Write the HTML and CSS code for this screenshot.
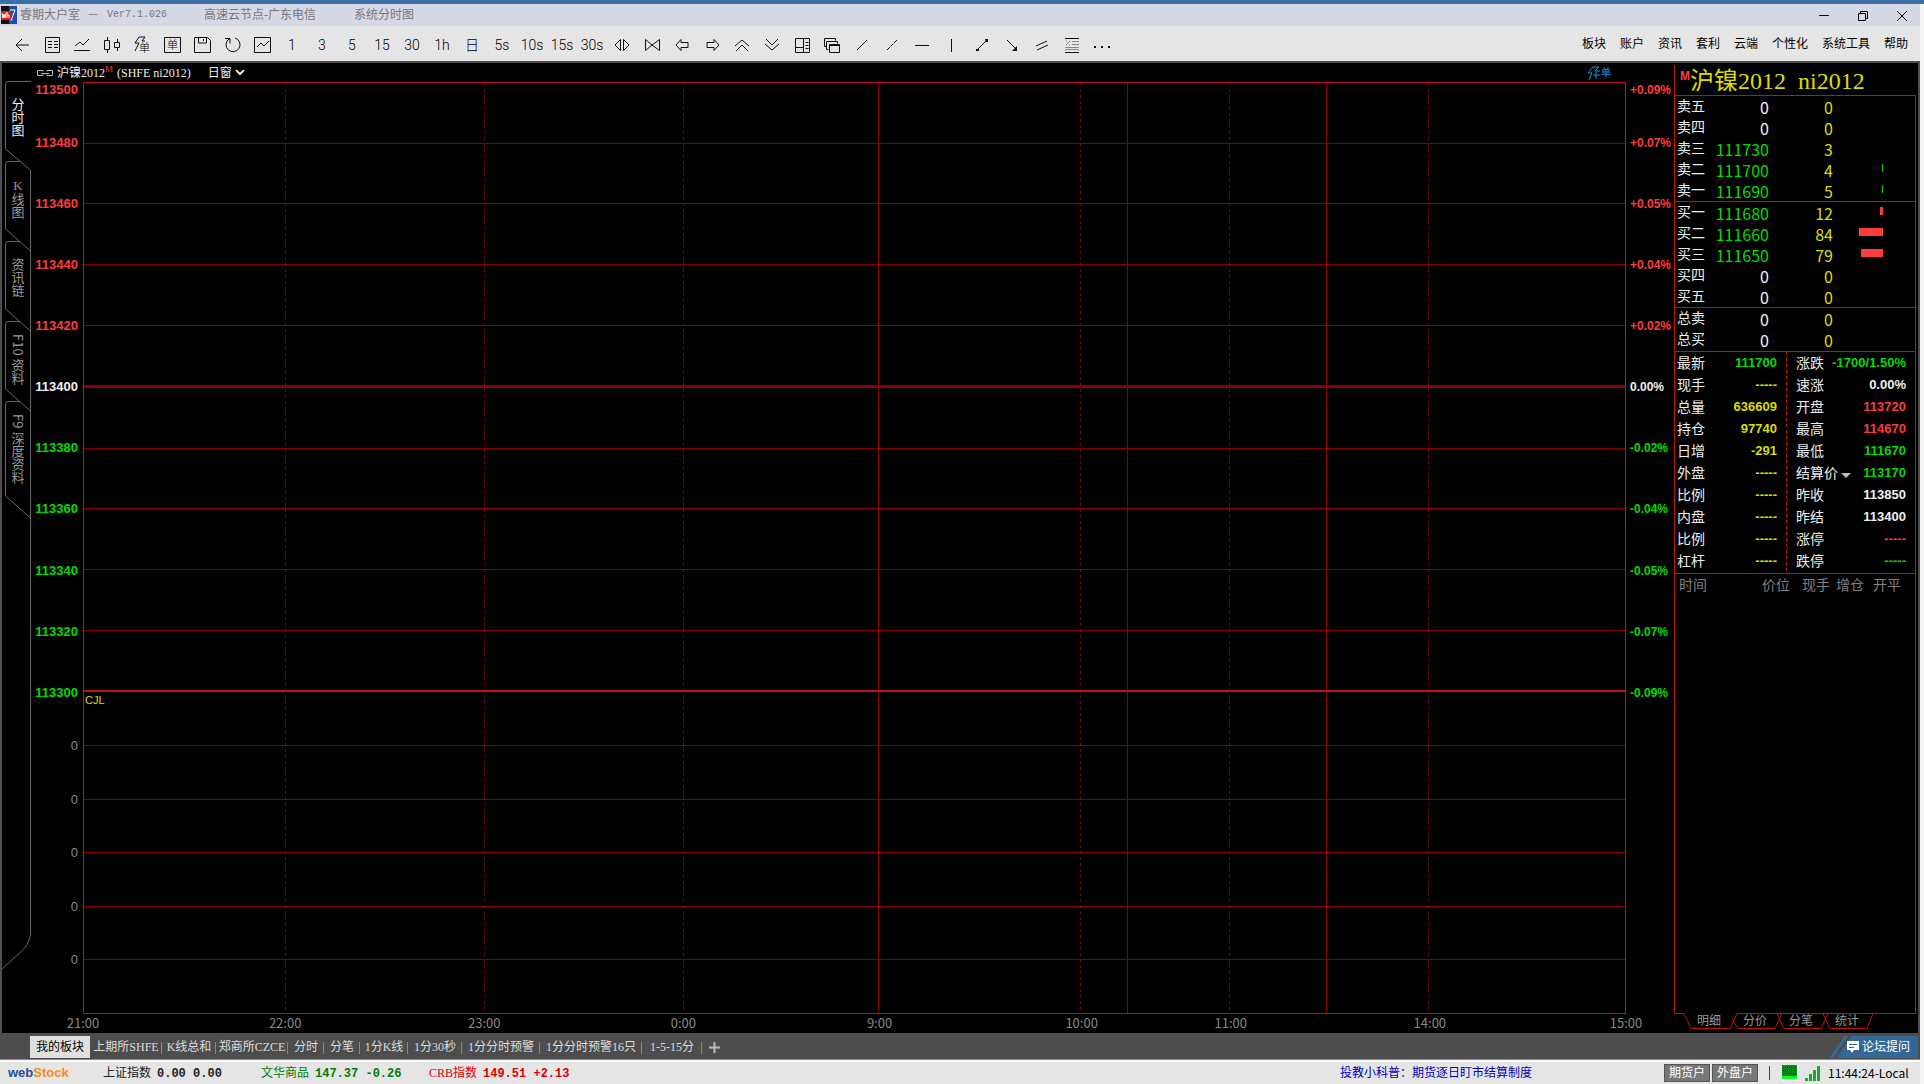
FILE: index.html
```html
<!DOCTYPE html>
<html lang="zh-CN">
<head>
    <meta charset="UTF-8">
    <meta name="viewport" content="width=device-width, initial-scale=1.0">
    <title>睿期大户室</title>
    <link rel="stylesheet" href="styles.css">
</head>
<body>
    <div class="window">
        <header class="titlebar">
            <svg class="app-icon" width="16" height="18" viewBox="0 0 16 18">
                <rect width="16" height="18" fill="#111"/>
                <rect x="8" width="8" height="18" fill="#1b4fa8"/>
                <rect y="5" width="10" height="9" fill="#d81e1e"/>
                <path d="M1 7l1 5 1-4 1 4 1-5M6 6v6M6 9h2v3M9 4h5l-4 11" stroke="#fff" fill="none"/>
            </svg>
            <span class="app-name">睿期大户室</span>
            <span class="dash">－</span>
            <span class="version">Ver7.1.026</span>
            <span class="node">高速云节点-广东电信</span>
            <span>系统分时图</span>
            <div class="win-buttons">
                <button aria-label="最小化"><svg width="12" height="12"><path d="M1 5.500h10"/></svg></button>
                <button aria-label="还原"><svg width="12" height="12"><path d="M1.500 3.500h7v7h-7zM3.500 3v-1.500h7v7h-2"/></svg></button>
                <button aria-label="关闭"><svg width="12" height="12"><path d="M1 1l10 10M11 1L1 11"/></svg></button>
            </div>
        </header>

        <nav class="toolbar">
            <div class="tools">
                <button aria-label="返回"><svg viewBox="0 0 18 18"><path d="M3 9h13M9 3L3 9l6 6"/></svg></button>
                <button aria-label="报价"><svg viewBox="0 0 18 18"><path d="M2.500 1.500h14v15h-14zM5 5.500h4M11 5.500h4M5 8.500h4M11 8.500h4M5 11.500h4M11 11.500h4"/></svg></button>
                <button aria-label="分时"><svg viewBox="0 0 18 18"><path d="M1 14.500h16M2 10l5-4 3 3 6-6"/></svg></button>
                <button aria-label="K线"><svg viewBox="0 0 18 18"><path d="M1.500 4.500h5v9h-5zM4.500 1v3M4.500 14v3M11.500 6.500h5v5h-5zM14.500 3v3M14.500 12v3"/></svg></button>
                <button aria-label="闪电下单"><svg viewBox="0 0 18 18"><path d="M6 1h6l-3 4h3M6 1L2 7h4l-4 8"/><text x="6" y="16">单</text></svg></button>
                <button aria-label="下单"><svg viewBox="0 0 18 18"><path d="M1.500 1.500h16v15h-16z"/><text x="4" y="13">单</text></svg></button>
                <button aria-label="保存"><svg viewBox="0 0 18 18"><path d="M1.500 1.500h13l3 3v12h-16zM5.500 2v5h8v-5M10.500 3v2"/></svg></button>
                <button aria-label="刷新"><svg viewBox="0 0 18 18"><path d="M12 2a7 7 0 1 1-6 1M2 2.500h5v5"/></svg></button>
                <button aria-label="指标"><svg viewBox="0 0 18 18"><path d="M1.500 1.500h16v15h-16zM4 11l4-4 3 3 5-5"/></svg></button>
                <button>1</button>
                <button>3</button>
                <button>5</button>
                <button>15</button>
                <button>30</button>
                <button>1h</button>
                <button>日</button>
                <button>5s</button>
                <button>10s</button>
                <button>15s</button>
                <button>30s</button>
                <button aria-label="放大"><svg viewBox="0 0 18 18"><path d="M7.500 3.500v11L2 9zM10.500 3.500v11L16 9z"/></svg></button>
                <button aria-label="缩小"><svg viewBox="0 0 18 18"><path d="M2.500 3.500v11L9 9zM16.500 3.500v11L9 9z"/></svg></button>
                <button aria-label="左移"><svg viewBox="0 0 18 18"><path d="M3 9l5-5.500v3h7v5h-7v3z"/></svg></button>
                <button aria-label="右移"><svg viewBox="0 0 18 18"><path d="M16 9l-5-5.500v3h-7v5h7v3z"/></svg></button>
                <button aria-label="上移"><svg viewBox="0 0 18 18"><path d="M2 10l7-6 7 6M3 15l6-6 6 6"/></svg></button>
                <button aria-label="下移"><svg viewBox="0 0 18 18"><path d="M2 8l7 6 7-6M3 3l6 6 6-6"/></svg></button>
                <button aria-label="布局"><svg viewBox="0 0 18 18"><path d="M2.500 2.500h14v14h-14zM10.500 2v15M3 11.500h7M12.500 6.500h3M12.500 9.500h3M12.500 12.500h3"/></svg></button>
                <button aria-label="窗口"><svg viewBox="0 0 18 18"><path d="M3.500 10.500h-2v-8h11v2M5.500 13.500h-2v-8h11v2M6.500 8.500h10v8h-10zM6 9.500h11"/></svg></button>
                <button aria-label="线段"><svg viewBox="0 0 18 18"><path d="M4 14L14 4"/></svg></button>
                <button aria-label="虚线"><svg viewBox="0 0 18 18"><path d="M4 14L14 4" stroke-dasharray="4 1"/></svg></button>
                <button aria-label="水平线"><svg viewBox="0 0 18 18"><path d="M2 9.500h14"/></svg></button>
                <button aria-label="垂直线"><svg viewBox="0 0 18 18"><path d="M8.500 3v13"/></svg></button>
                <button aria-label="双端线"><svg viewBox="0 0 18 18"><path d="M4 14L14 4"/><path class="solid" d="M3 13h3v2h-3zM12 3h3v3h-2z"/></svg></button>
                <button aria-label="箭头"><svg viewBox="0 0 18 18"><path d="M4 4l9 9"/><path class="solid" d="M14 10v5h-5z"/></svg></button>
                <button aria-label="平行线"><svg viewBox="0 0 18 18"><path d="M3 10l11-5M4 14l11-5"/></svg></button>
                <button aria-label="黄金分割"><svg viewBox="0 0 18 18"><path d="M2 2.500h14M2 16.500h14"/><path class="dim" d="M9 5.500h7M9 8.500h7M2 11.500h14M2 13.500h14M3 9l4-4M3 5h1M6 9h1"/></svg></button>
                <button aria-label="更多"><svg viewBox="0 0 18 18"><path class="solid" d="M1 10h2v2h-2zM8 10h2v2h-2zM15 10h2v2h-2z"/></svg></button>
            </div>
            <div class="menu">
                <a href="#">板块</a>
                <a href="#">账户</a>
                <a href="#">资讯</a>
                <a href="#">套利</a>
                <a href="#">云端</a>
                <a href="#">个性化</a>
                <a href="#">系统工具</a>
                <a href="#">帮助</a>
            </div>
        </nav>

        <main class="workspace">
            <aside class="side">
                <div class="side-tabs">
                    <svg class="side-lines" width="29" height="440" viewBox="0 0 29 440">
                        <path d="M29 .5H6Q3.500 .5 3.500 3V68L28.500 89V437M18 80.500H6Q3.500 80.500 3.500 83V148L28.500 170M18 160.500H6Q3.500 160.500 3.500 163V228L28.500 250M18 240.500H6Q3.500 240.500 3.500 243V308L28.500 330M18 320.500H6Q3.500 320.500 3.500 323V415L28.500 437V440"/>
                    </svg>
                    <div class="side-buttons">
                        <button class="active">分时图</button>
                        <button><span class="upright">K</span>线图</button>
                        <button>资讯链</button>
                        <button>F10 资料</button>
                        <button>F9 深度资料</button>
                    </div>
                </div>
                <div class="side-rule"></div>
                <svg class="side-curve" width="29" height="36" viewBox="0 0 29 36"><path d="M28.500 0C27 12 20 17 12 24L0 35"/></svg>
            </aside>

            <section class="chart">
                <div class="chart-head">
                    <svg width="16" height="8" viewBox="0 0 16 8"><path d="M6 2.500V1.500H.5v5H6V5.500M10 2.500V1.500h5.500v5H10V5.500M4 4.500h8" fill="none" stroke="#bbb"/></svg>
                    <span class="contract">沪镍2012<sup>M</sup></span>
                    <span class="code">(SHFE ni2012)</span>
                    <button class="day">日窗<svg width="10" height="6" viewBox="0 0 10 6"><path d="M1 0l4 4 4-4" fill="none" stroke="#eee" stroke-width="2"/></svg></button>
                    <button class="flash"><svg width="14" height="15" viewBox="0 0 14 15"><path d="M6 1h6L8 5h5M6 1L1 7h4l-3 7M6 9h7M9 6v7" fill="none" stroke="#0a9be8"/></svg>单</button>
                </div>
                <div class="chart-body">
                    <div class="axis price-axis">
                        <div class="prices">
                            <div class="first up"><span>113500</span></div>
                            <div class="up"><span>113480</span></div>
                            <div class="up"><span>113460</span></div>
                            <div class="up"><span>113440</span></div>
                            <div class="up"><span>113420</span></div>
                            <div class="flat"><span>113400</span></div>
                            <div class="down"><span>113380</span></div>
                            <div class="down"><span>113360</span></div>
                            <div class="down"><span>113340</span></div>
                            <div class="down"><span>113320</span></div>
                            <div class="down"><span>113300</span></div>
                        </div>
                        <div class="volumes">
                            <div><span>0</span></div>
                            <div><span>0</span></div>
                            <div><span>0</span></div>
                            <div><span>0</span></div>
                            <div><span>0</span></div>
                            <div></div>
                        </div>
                    </div>
                    <div class="plot">
                        <div class="v-lines">
                            <i class="dash-line"></i><i class="dash-line"></i><i class="dash-line"></i><i class="full-line"></i><i class="dash-line"></i><i class="full-line"></i><i class="dash-line"></i><i class="full-line"></i><i class="dash-line"></i><i></i>
                        </div>
                        <div class="h-lines">
                            <div class="prices">
                                <div></div><div></div><div></div><div></div><div class="mid"></div>
                                <div></div><div></div><div></div><div></div><div class="base"></div>
                            </div>
                            <div class="volumes">
                                <div class="cjl">CJL</div><div></div><div></div><div></div><div></div><div class="last"></div>
                            </div>
                        </div>
                    </div>
                    <div class="axis percent-axis">
                        <div class="prices">
                            <div class="first up"><span>+0.09%</span></div>
                            <div class="up"><span>+0.07%</span></div>
                            <div class="up"><span>+0.05%</span></div>
                            <div class="up"><span>+0.04%</span></div>
                            <div class="up"><span>+0.02%</span></div>
                            <div class="flat"><span>0.00%</span></div>
                            <div class="down"><span>-0.02%</span></div>
                            <div class="down"><span>-0.04%</span></div>
                            <div class="down"><span>-0.05%</span></div>
                            <div class="down"><span>-0.07%</span></div>
                            <div class="down"><span>-0.09%</span></div>
                        </div>
                        <div class="volumes"></div>
                    </div>
                </div>
                <div class="times">
                    <span>21:00</span><span>22:00</span><span>23:00</span><span>0:00</span><span>9:00</span><span>10:00</span><span>11:00</span><span>14:00</span><span>15:00</span>
                </div>
            </section>

            <aside class="quote">
                <div class="quote-box">
                    <h1><sup>M</sup>沪镍2012&nbsp; ni2012</h1>
                    <table class="depth">
                        <tr><th>卖五</th><td>0</td><td>0</td><td></td></tr>
                        <tr><th>卖四</th><td>0</td><td>0</td><td></td></tr>
                        <tr><th>卖三</th><td class="down">111730</td><td>3</td><td></td></tr>
                        <tr><th>卖二</th><td class="down">111700</td><td>4</td><td><i class="bar ask" style="width:1px"></i></td></tr>
                        <tr><th>卖一</th><td class="down">111690</td><td>5</td><td><i class="bar ask" style="width:1px"></i></td></tr>
                    </table>
                    <table class="depth">
                        <tr><th>买一</th><td class="down">111680</td><td>12</td><td><i class="bar" style="width:3px"></i></td></tr>
                        <tr><th>买二</th><td class="down">111660</td><td>84</td><td><i class="bar" style="width:24px"></i></td></tr>
                        <tr><th>买三</th><td class="down">111650</td><td>79</td><td><i class="bar" style="width:22px"></i></td></tr>
                        <tr><th>买四</th><td>0</td><td>0</td><td></td></tr>
                        <tr><th>买五</th><td>0</td><td>0</td><td></td></tr>
                    </table>
                    <table class="depth total">
                        <tr><th>总卖</th><td>0</td><td>0</td><td></td></tr>
                        <tr><th>总买</th><td>0</td><td>0</td><td></td></tr>
                    </table>
                    <div class="stats">
                        <table>
                            <tr><th>最新</th><td class="down">111700</td></tr>
                            <tr><th>现手</th><td>-----</td></tr>
                            <tr><th>总量</th><td>636609</td></tr>
                            <tr><th>持仓</th><td>97740</td></tr>
                            <tr><th>日增</th><td>-291</td></tr>
                            <tr><th>外盘</th><td>-----</td></tr>
                            <tr><th>比例</th><td>-----</td></tr>
                            <tr><th>内盘</th><td>-----</td></tr>
                            <tr><th>比例</th><td>-----</td></tr>
                            <tr><th>杠杆</th><td>-----</td></tr>
                        </table>
                        <table class="right">
                            <tr><th>涨跌</th><td class="down">-1700/1.50%</td></tr>
                            <tr><th>速涨</th><td class="flat">0.00%</td></tr>
                            <tr><th>开盘</th><td class="up">113720</td></tr>
                            <tr><th>最高</th><td class="up">114670</td></tr>
                            <tr><th>最低</th><td class="down">111670</td></tr>
                            <tr><th class="settle">结算价</th><td class="down">113170</td></tr>
                            <tr><th>昨收</th><td class="flat">113850</td></tr>
                            <tr><th>昨结</th><td class="flat">113400</td></tr>
                            <tr><th>涨停</th><td class="up">-----</td></tr>
                            <tr><th>跌停</th><td class="down">-----</td></tr>
                        </table>
                    </div>
                    <table class="ticks">
                        <tr><th>时间</th><th>价位</th><th>现手</th><th>增仓</th><th>开平</th></tr>
                    </table>
                </div>
                <div class="quote-tabs">
                    <svg width="242" height="17" viewBox="0 0 242 17"><path d="M0 .5H10L17 15.500H56L63 .5H242M58 6L64 15.500H101L108 .5M103 .5L110 15.500H147L154 .5M149 .5L156 15.500H193L199 .5"/></svg>
                    <div>
                        <button>明细</button><button>分价</button><button>分笔</button><button>统计</button>
                    </div>
                </div>
            </aside>
        </main>

        <nav class="sectors">
            <button class="active">我的板块</button>
            <button>上期所SHFE</button>
            <button>K线总和</button>
            <button>郑商所CZCE</button>
            <button>分时</button>
            <button>分笔</button>
            <button>1分K线</button>
            <button>1分30秒</button>
            <button>1分分时预警</button>
            <button>1分分时预警16只</button>
            <button>1-5-15分</button>
            <button class="add" aria-label="添加"><svg width="11" height="11"><path d="M5.500 0v11M0 5.500h11" stroke="#bbb" stroke-width="2"/></svg></button>
            <a class="forum" href="#"><svg width="12" height="12" viewBox="0 0 12 12"><path fill="#fff" d="M0 0h12v9H7l-2 3-2-3H0z"/><path d="M2 3.500h8M2 6.500h5" stroke="#336794"/></svg>论坛提问</a>
        </nav>

        <footer class="status">
            <a class="logo" href="#">web<b>S</b><i>tock</i></a>
            <span class="index sh">上证指数 <b>0.00 0.00</b></span>
            <span class="index wh">文华商品 <b>147.37 -0.26</b></span>
            <span class="index crb">CRB指数 <b>149.51 +2.13</b></span>
            <a class="news" href="#">投教小科普：期货逐日盯市结算制度</a>
            <button>期货户</button>
            <button>外盘户</button>
            <span class="bar-red"></span>
            <svg class="net" width="16" height="16"><path fill="#fff" d="M0 0h16v16H0z"/><path fill="#0a8a1a" d="M0 0h15v11H0z"/><path fill="#0f2" d="M0 11h15v3H0z"/><path d="M1 2.500h13M1 5.500h13M1 8.500h13" stroke="#043" stroke-dasharray="1 1"/></svg>
            <svg class="signal" width="15" height="15"><path fill="#23a536" d="M0 12h3v3H0zM4 8h3v7H4zM8 4h3v11H8zM12 0h3v15h-3z"/></svg>
            <time>11:44:24-Local</time>
        </footer>
    </div>
</body>
</html>
```

FILE: styles.css
```css
* { box-sizing: border-box; }
body {
    margin: 0;
    background: #f4f4f4;
    border-top: 4px solid #3a6ea5;
    font-family: "Liberation Serif", "Noto Sans CJK SC", serif;
    font-size: 12px;
    line-height: 16px;
}
button {
    font: inherit;
    color: inherit;
    background: none;
    border: none;
    padding: 0;
}
a { color: inherit; text-decoration: none; }
svg { display: block; }
table { border-collapse: separate; border-spacing: 0; }
th { font-weight: normal; text-align: left; }
td, th { padding: 0; }
.up { color: #ff3c3c; }
.down { color: #00dc00; }
.flat { color: #f0f0f0; }

.window {
    display: flex;
    flex-direction: column;
    min-height: calc(100vh - 4px);
    margin-right: 4px;
    background: #4d4d4d;
}

/* title bar */
.titlebar {
    display: flex;
    align-items: center;
    height: 22px;
    padding: 0 12px 0 1px;
    background: #d6d8e6;
    color: #777;
}
.app-icon { margin-right: 3px; }
.dash { margin-left: 7px; }
.version {
    margin: 0 37px 0 8px;
    font-family: "Liberation Mono", monospace;
    font-size: 10px;
}
.node { margin-right: 38px; }
.win-buttons {
    display: flex;
    gap: 27px;
    margin-left: auto;
    padding-top: 2px;
}
.win-buttons path { fill: none; stroke: #000; }

/* toolbar */
.toolbar {
    display: flex;
    justify-content: space-between;
    height: 35px;
    padding: 0 12px 0 7px;
    background: #e5e5e5;
    color: #000;
}
.tools { display: flex; padding-top: 3px; }
.tools button {
    width: 30px;
    height: 32px;
    font-family: Roboto, "Noto Sans CJK SC", sans-serif;
    font-size: 14px;
    font-weight: 300;
}
.tools svg { width: 18px; height: 18px; margin: 0 auto; }
.tools path { fill: none; stroke: #111; }
.tools .solid { fill: #111; stroke: none; }
.tools .dim { stroke: #888; }
.tools text { font-size: 11px; }
.menu {
    display: flex;
    align-items: center;
    gap: 14px;
}

/* workspace */
.workspace {
    display: flex;
    flex: 1;
    margin: 2px 2px 0;
    background: #000;
}
.side {
    display: flex;
    flex-direction: column;
    width: 29px;
    padding: 18px 0 63px;
    color: #999;
}
.side path { fill: none; stroke: #666; }
.side-tabs { display: grid; }
.side-lines, .side-buttons { grid-area: 1 / 1; }
.side-buttons {
    display: flex;
    flex-direction: column;
    align-items: center;
    padding-left: 2px;
}
.side-buttons button {
    height: 80px;
    padding-top: 17px;
    writing-mode: vertical-rl;
    text-align: left;
    font-family: "Noto Sans CJK SC", sans-serif;
    font-size: 13px;
}
.side-buttons button:nth-child(4) { padding-top: 13px; }
.side-buttons button:last-child { height: 120px; padding-top: 13px; }
.side-buttons .active { color: #eee; }
.upright { text-orientation: upright; font-family: "Liberation Serif", serif; }
.side-rule { flex: 1; border-right: 1px solid #666; }

.chart { display: flex; flex: 1; flex-direction: column; }
.chart-head {
    display: flex;
    align-items: center;
    height: 19px;
    padding: 1px 13px 0 6px;
    color: #eee;
}
.contract { margin-left: 4px; }
.contract sup { color: #ff3c3c; font-size: 9px; line-height: 1; }
.code { margin: 0 17px 0 4px; }
.day, .flash { display: flex; align-items: center; gap: 3px; }
.flash {
    gap: 0;
    margin-left: auto;
    margin-right: 50px;
    color: #0a9be8;
    font-size: 10px;
}
.chart-body {
    display: grid;
    flex: 1;
    grid-template-columns: 52px 1fr 48px;
}
.axis, .h-lines { display: flex; flex-direction: column; }
.axis {
    font: bold 12px/14px "Liberation Sans", Arial, sans-serif;
}
.prices, .volumes { display: flex; flex-direction: column; }
.prices { flex: 610 0 0; }
.volumes { flex: 321 0 0; }
.prices div, .volumes div { flex: 1 0 0; }
.axis .prices div, .axis .volumes div {
    display: flex;
    align-items: flex-end;
}
.axis span { margin-bottom: -7px; }
.axis .prices .first { flex: 0 0 0px; height: 0; align-items: flex-start; }
.axis .first span { margin-top: 1px; }
.price-axis { padding-right: 5px; font-size: 13px; }
.price-axis .prices div, .price-axis .volumes div { justify-content: flex-end; }
.percent-axis { padding-left: 4px; }
.axis .volumes { color: #888; font-weight: normal; }
.plot {
    display: grid;
    border: 1px solid #c0140c;
}
.v-lines, .h-lines { grid-area: 1 / 1; }
.v-lines {
    display: grid;
    grid-template-columns: 202fr 199fr 199fr 196fr 202fr 47fr 102fr 97fr 102fr 196fr;
}
.full-line { border-right: 1px solid #8c0000; }
.dash-line {
    background: repeating-linear-gradient(#8c0000 0 3px, transparent 3px 6px) right / 1px 100% no-repeat;
}
.h-lines .prices div, .h-lines .volumes div { border-bottom: 1px solid #8c0000; }
.h-lines .prices .mid { border-bottom-width: 3px; }
.h-lines .prices .base { border-bottom: 2px solid #c0140c; }
.h-lines .volumes .last { border-bottom: none; }
.cjl {
    padding-left: 1px;
    color: #dcdc00;
    font-family: "Liberation Sans", Arial, sans-serif;
    font-size: 11px;
}
.times {
    display: grid;
    grid-template-columns: 0 202fr 199fr 199fr 196fr 202fr 149fr 199fr 196fr;
    height: 19px;
    margin: 0 48px 0 52px;
    color: #888;
    font: 13px/18px "Noto Sans CJK SC", sans-serif;
}
.times span { width: 40px; margin-right: -20px; justify-self: end; text-align: center; }

/* quote panel */
.quote {
    display: flex;
    flex-direction: column;
    width: 242px;
    margin: 2px 2px 0 0;
}
.quote-box {
    display: flex;
    flex: 1;
    flex-direction: column;
    border-left: 1px solid #c0140c;
}
.quote h1 {
    height: 30px;
    margin: 0;
    padding-left: 5px;
    color: #dcdc00;
    font-size: 24px;
    font-weight: normal;
    line-height: 32px;
    white-space: nowrap;
}
.quote h1 sup {
    color: #ff3c3c;
    font: bold 12px/12px "Liberation Sans", Arial, sans-serif;
}
.depth, .stats, .ticks {
    width: 100%;
    border-top: 1px solid #c0140c;
    border-right: 1px solid #c0140c;
}
.depth { table-layout: fixed; }
.depth tr { height: 21px; }
.depth th, .stats th, .ticks th { color: #eee; font-size: 14px; }
.depth th { width: 34px; padding: 1px 0 0 2px; }
.depth td {
    width: 60px;
    color: #f0f0f0;
    font: 16px/20px "Noto Sans CJK SC", sans-serif;
    text-align: right;
}
.depth td.down { color: #00dc00; }
.depth td:nth-child(3) { width: 64px; color: #dcdc00; }
.depth td:last-child { width: auto; padding-right: 32px; }
.total { border-bottom: 1px solid #000; }
.bar {
    display: block;
    height: 8px;
    margin-left: auto;
    margin-bottom: 4px;
    background: #ff3c3c;
}
.ask { background: #00dc00; }
.stats { display: flex; padding-bottom: 1px; }
.stats table { width: 111px; }
.stats table.right {
    width: 129px;
    background: repeating-linear-gradient(#c0140c 0 3px, transparent 3px 6px) left / 1px 100% no-repeat;
}
.stats tr { height: 22px; }
.stats th { padding: 2px 0 0 2px; white-space: nowrap; }
.stats .right th { padding-left: 10px; }
.stats td {
    padding-right: 9px;
    color: #dcdc00;
    font: bold 13px/14px "Liberation Sans", Arial, sans-serif;
    text-align: right;
    white-space: nowrap;
}
.stats td.down { color: #00dc00; }
.stats td.up { color: #ff3c3c; }
.stats td.flat { color: #f0f0f0; }
/* the arrow hangs past the label so it does not widen the column */
.settle::after {
    content: "";
    display: inline-block;
    margin: 0 -13px 0 3px;
    border: 5px solid transparent;
    border-top-color: #bbb;
    border-bottom: none;
}
.right th { width: 30px; }
.right .settle { max-width: 30px; }
.ticks { flex: 1; display: block; }
.ticks th { height: 24px; color: #808080; padding: 0 0 0 6px; white-space: nowrap; }
.ticks th:first-child { width: 82px; padding-left: 4px; }
.ticks th:nth-child(2) { width: 39px; padding-left: 5px; }
.ticks th:nth-child(5) { padding-left: 9px; }
.quote-tabs { display: grid; height: 20px; color: #999; }
.quote-tabs svg, .quote-tabs div { grid-area: 1 / 1; }
.quote-tabs path { fill: none; stroke: #c0140c; }
.quote-tabs div { padding-left: 12px; }
.quote-tabs button { width: 46px; }

/* sector tabs */
.sectors {
    display: grid;
    grid-template-columns: 60px 72px 54px 72px 36px 36px 48px 54px 78px 102px 60px 24px 1fr;
    height: 27px;
    padding: 3px 2px 1px 28px;
    border-bottom: 1px solid #888;
    color: #ddd;
}
.sectors button { position: relative; white-space: nowrap; }
.sectors button:not(.active):not(.add)::after {
    content: "";
    position: absolute;
    right: -2px;
    top: 6px;
    height: 12px;
    border-right: 1px solid #888;
}
.sectors .active { margin: 0 -2px 0 2px; background: #e0e0e0; color: #000; }
.sectors button:not(.active) { padding-left: 4px; }
.sectors .add { display: flex; align-items: center; justify-content: center; }
.forum {
    display: flex;
    align-items: center;
    justify-content: flex-end;
    justify-self: end;
    gap: 3px;
    width: 93px;
    padding-right: 8px;
    background: linear-gradient(125deg, transparent 16px, #336794 16px 19px, #4d4d4d 19px 22px, #336794 22px);
    color: #fff;
}

/* status bar */
.status {
    display: flex;
    align-items: center;
    height: 24px;
    padding: 0 11px 0 8px;
    border-top: 2px solid #fff;
    background: #e5e5e5;
    white-space: nowrap;
}
.logo {
    width: 95px;
    color: #1c4f9c;
    font: bold 13px/20px "Liberation Sans", Arial, sans-serif;
}
.logo b, .logo i { color: #f58a1f; font-style: normal; }
.index b { margin-left: 3px; font: bold 12px/16px "Liberation Mono", monospace; }
.sh { width: 158px; color: #222; }
.wh { width: 168px; color: #007d00; }
.crb { color: #dc0000; }
.news { margin-left: auto; margin-right: 132px; color: #0000b4; }
.status button {
    width: 46px;
    height: 18px;
    margin-right: 2px;
    border: 1px solid #555;
    background: #777;
    color: #fff;
    line-height: 15px;
}
.bar-red { width: 1px; height: 14px; margin: 0 12px 0 9px; background: #e00000; }
.signal { margin: 0 8px 0 7px; }
.status time { width: 81px; font: 12px/16px "Noto Sans CJK SC", sans-serif; }
```
